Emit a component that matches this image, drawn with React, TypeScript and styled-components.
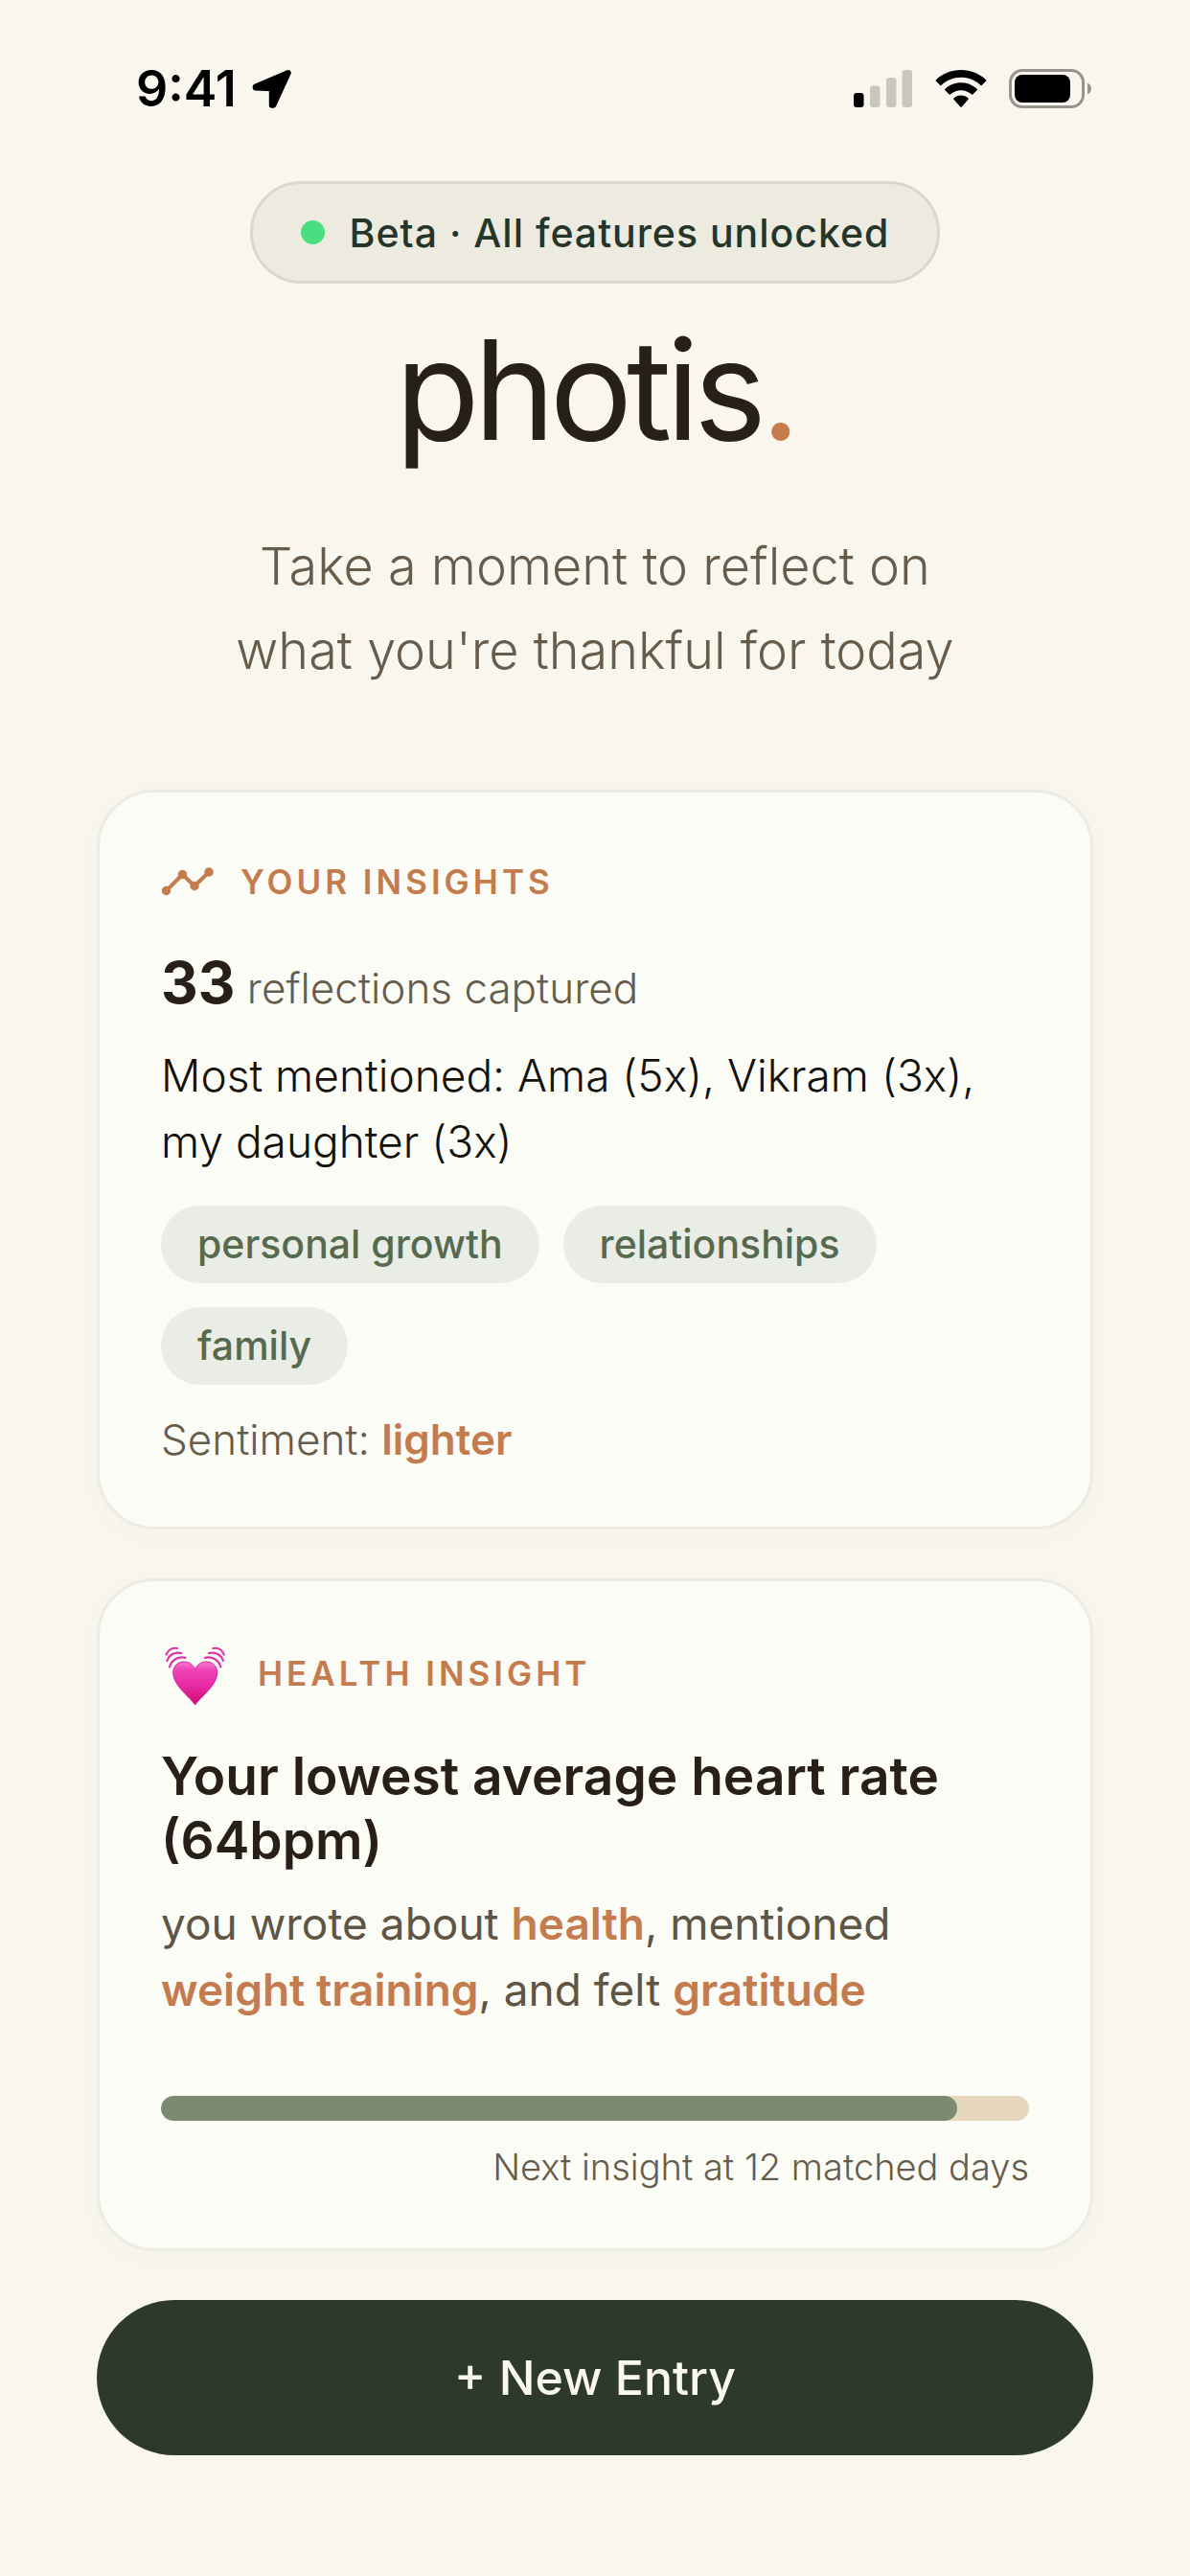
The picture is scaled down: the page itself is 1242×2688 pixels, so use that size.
import React from "react";
import styled, { createGlobalStyle } from "styled-components";

const color = {
  page: "#f9f6ee",
  card: "#fbfcf6",
  line: "#ecebe4",
  ink: "#282016",
  black: "#14110d",
  muted: "#675c4c",
  accent: "#c47b4e",
  forest: "#2d3a2b",
  sage: "#7a8b70",
};

const GlobalStyle = createGlobalStyle`
  *, *::before, *::after { box-sizing: border-box; }
  body {
    margin: 0;
    background: ${color.page};
    color: ${color.ink};
    font-family: Inter, "Liberation Sans", sans-serif;
    -webkit-font-smoothing: antialiased;
  }
  h1, h2, h3, p, ul { margin: 0; padding: 0; }
`;

const Screen = styled.div`
  min-height: 100vh;
  display: flex;
  flex-direction: column;
  background: ${color.page};
`;

const StatusBar = styled.header`
  display: flex;
  align-items: center;
  justify-content: space-between;
  height: 189px;
  padding: 0 102px 4px 142px;
`;

const StatusGroup = styled.div<{ $gap: number }>`
  display: flex;
  align-items: center;
  gap: ${(p) => p.$gap}px;
`;

const Clock = styled.span`
  font-size: 52px;
  font-weight: 600;
  line-height: 60px;
  color: #000;
`;

const Main = styled.main`
  display: flex;
  flex-direction: column;
  padding: 0 101px 120px;
`;

const BetaPill = styled.div`
  align-self: center;
  display: flex;
  align-items: center;
  gap: 26px;
  height: 107px;
  padding: 0 50px;
  border: 3px solid #dad7cb;
  border-radius: 54px;
  background: #edebdf;
  color: #25352a;
  font-size: 41px;
  font-weight: 500;
  letter-spacing: 1px;
`;

const Dot = styled.span`
  width: 25px;
  height: 25px;
  border-radius: 50%;
  background: #4ade80;
`;

const Logo = styled.h1`
  margin-top: 26px;
  text-align: center;
  font-size: 144px;
  font-weight: 400;
  line-height: 170px;
  letter-spacing: -6px;
  span { color: ${color.accent}; }
`;

const Tagline = styled.p`
  margin-top: 55px;
  text-align: center;
  font-size: 54px;
  font-weight: 300;
  line-height: 88px;
  color: ${color.muted};
`;

const Card = styled.section<{ $space: number }>`
  margin-top: ${(p) => p.$space}px;
  padding: 63px 64px 62px;
  border: 3px solid ${color.line};
  border-radius: 60px;
  background: ${color.card};
  box-shadow: 0 6px 36px rgba(40, 32, 22, 0.02);
`;

const CardHeader = styled.div<{ $gap: number }>`
  display: flex;
  align-items: center;
  gap: ${(p) => p.$gap}px;
`;

const CardLabel = styled.h2`
  font-size: 35px;
  font-weight: 600;
  line-height: 44px;
  letter-spacing: 4px;
  text-transform: uppercase;
  color: ${color.accent};
`;

const Count = styled.p`
  margin-top: 45px;
  font-size: 44px;
  font-weight: 300;
  line-height: 72px;
  color: ${color.muted};
  strong {
    font-size: 60px;
    font-weight: 700;
    line-height: 60px;
    color: ${color.ink};
  }
`;

const Mentions = styled.p`
  margin-top: 21px;
  font-size: 46px;
  font-weight: 300;
  line-height: 69px;
  color: ${color.black};
`;

const Chips = styled.ul`
  display: flex;
  flex-wrap: wrap;
  gap: 25px;
  margin-top: 32px;
  list-style: none;
`;

const Chip = styled.li`
  padding: 0 38px;
  border-radius: 41px;
  background: #eaede5;
  color: #566a50;
  font-size: 41px;
  font-weight: 500;
  line-height: 81px;
`;

const Sentiment = styled.p`
  margin-top: 29px;
  font-size: 44px;
  font-weight: 300;
  line-height: 57px;
  color: ${color.muted};
`;

const Accent = styled.strong`
  font-weight: 600;
  color: ${color.accent};
`;

const Headline = styled.h3`
  margin-top: 41px;
  font-size: 55px;
  font-weight: 600;
  line-height: 67px;
`;

const Story = styled.p`
  margin-top: 19px;
  font-size: 46px;
  font-weight: 400;
  line-height: 69px;
  color: #5f5545;
`;

const Track = styled.div`
  height: 26px;
  margin-top: 76px;
  border-radius: 13px;
  overflow: hidden;
  background: #e6d6be;
`;

const Fill = styled.div`
  height: 100%;
  border-radius: 13px;
  background: ${color.sage};
`;

const Note = styled.p`
  margin-top: 26px;
  text-align: right;
  font-size: 38px;
  font-weight: 300;
  line-height: 45px;
  color: ${color.muted};
`;

const PrimaryButton = styled.button`
  margin-top: 51px;
  height: 162px;
  border: 0;
  border-radius: 81px;
  background: ${color.forest};
  color: #faf7ef;
  font-family: inherit;
  font-size: 50px;
  font-weight: 500;
  cursor: pointer;
`;

const LocationIcon = () => (
  <svg width="42" height="42" viewBox="0 0 42 42" aria-hidden="true">
    <path
      d="M37.800 4 L22.300 37.800 L20.800 37.800 L20.800 20.300 L3.700 19.600 L3.700 18.600 Z"
      fill="#000"
      stroke="#000"
      strokeWidth="6"
      strokeLinejoin="round"
    />
  </svg>
);

const SignalIcon = () => (
  <svg width="62" height="41" viewBox="0 0 62 41" aria-hidden="true">
    <rect x="0" y="25" width="10.5" height="15" rx="3" fill="#000" />
    <rect x="17" y="17.5" width="10.5" height="22.5" rx="3" fill="#c8c6bf" />
    <rect x="34" y="9" width="10.5" height="31" rx="3" fill="#c8c6bf" />
    <rect x="50.5" y="1" width="10.5" height="39" rx="3" fill="#c8c6bf" />
  </svg>
);

const WifiIcon = () => (
  <svg width="54" height="41" viewBox="0 0 54 41" aria-hidden="true">
    <path d="M27 1 C37 1 46.500 5 53.200 11.400 Q53.700 12 53.200 12.600 L48.700 17 Q48.200 17.500 47.600 17 C42 11.800 35 8.800 27 8.800 C19 8.800 12 11.800 6.400 17 Q5.800 17.500 5.300 17 L0.800 12.600 Q0.300 12 0.800 11.400 C7.500 5 17 1 27 1 Z" />
    <path d="M27 14.300 C33.500 14.300 39.400 16.800 43.800 20.900 Q44.300 21.500 43.800 22.100 L39.300 26.500 Q38.700 27 38.100 26.500 C35.100 23.800 31.300 22.200 27 22.200 C22.700 22.200 18.900 23.800 15.900 26.500 Q15.300 27 14.700 26.500 L10.200 22.100 Q9.700 21.500 10.200 20.900 C14.600 16.800 20.500 14.300 27 14.300 Z" />
    <path d="M27 27.600 C30 27.600 32.600 28.700 34.600 30.500 Q35.200 31.100 34.600 31.700 L27.700 39.500 Q27 40.200 26.300 39.500 L19.400 31.700 Q18.800 31.100 19.400 30.500 C21.400 28.700 24 27.600 27 27.600 Z" />
  </svg>
);

const BatteryIcon = () => (
  <svg width="87" height="41" viewBox="0 0 87 41" aria-hidden="true">
    <rect x="1.500" y="1.500" width="76" height="38" rx="12.500" fill="none" stroke="#96948d" strokeWidth="3" />
    <rect x="6" y="6" width="58" height="29" rx="8" fill="#000" />
    <path d="M82 14.500 Q86 16.500 86 20.500 Q86 24.500 82 26.500 Z" fill="#96948d" />
  </svg>
);

const TrendIcon = () => (
  <svg width="57" height="60" viewBox="0 0 57 60" aria-hidden="true">
    <path
      d="M5.500 39.500 L22.500 22.500 L35 34.500 L50 20"
      fill="none"
      stroke={color.accent}
      strokeWidth="4"
      strokeLinejoin="round"
    />
    <circle cx="5.500" cy="39.500" r="4.700" fill={color.accent} />
    <circle cx="22.500" cy="22.500" r="4.700" fill={color.accent} />
    <circle cx="35" cy="34.500" r="4.700" fill={color.accent} />
    <circle cx="50" cy="20" r="4.700" fill={color.accent} />
  </svg>
);

const HeartIcon = () => (
  <svg width="72" height="66" viewBox="0 0 72 66" role="img" aria-label="Beating heart">
    <defs>
      <linearGradient id="heart" x1="0" y1="0" x2="0" y2="1">
        <stop offset="0" stopColor="#f77fd2" />
        <stop offset="0.180" stopColor="#ee45b8" />
        <stop offset="0.550" stopColor="#e82aa5" />
        <stop offset="1" stopColor="#cf0f6e" />
      </linearGradient>
    </defs>
    <path
      d="M35.700 66 C31 58.500 12.700 46 12.700 32.500 C12.700 25.500 17.500 21 24 21 C29.500 21 33.800 24 35.700 29 C37.600 24 41.900 21 47.400 21 C53.900 21 58.700 25.500 58.700 32.500 C58.700 46 40.400 58.500 35.700 66 Z"
      fill="url(#heart)"
      stroke="#d9209a"
      strokeWidth="1"
    />
    <g fill="none" stroke="#dc35a6" strokeWidth="2.200" strokeLinecap="round">
      <path d="M5.500 13.500 C7.500 8.500 12 6 17 7" />
      <path d="M6.500 20 C8.500 13.500 14.500 10.500 21.500 12" />
      <path d="M9 26.500 C11 19 17.500 15.200 25.500 16.800" />
      <path d="M65.900 13.500 C63.900 8.500 59.400 6 54.400 7" />
      <path d="M64.900 20 C62.900 13.500 56.900 10.500 49.900 12" />
      <path d="M62.400 26.500 C60.400 19 53.900 15.200 45.900 16.800" />
    </g>
  </svg>
);

const themes = ["personal growth", "relationships", "family"];
const matchedDays = 11;
const targetDays = 12;

export default function App() {
  return (
    <Screen>
      <GlobalStyle />
      <StatusBar>
        <StatusGroup $gap={16}>
          <Clock>9:41</Clock>
          <LocationIcon />
        </StatusGroup>
        <StatusGroup $gap={23}>
          <SignalIcon />
          <WifiIcon />
          <BatteryIcon />
        </StatusGroup>
      </StatusBar>
      <Main>
        <BetaPill>
          <Dot />
          <span>Beta · All features unlocked</span>
        </BetaPill>
        <Logo>
          photis<span>.</span>
        </Logo>
        <Tagline>
          Take a moment to reflect on
          <br />
          what you're thankful for today
        </Tagline>

        <Card $space={101}>
          <CardHeader $gap={26}>
            <TrendIcon />
            <CardLabel>Your insights</CardLabel>
          </CardHeader>
          <Count>
            <strong>33</strong> reflections captured
          </Count>
          <Mentions>Most mentioned: Ama (5x), Vikram (3x), my daughter (3x)</Mentions>
          <Chips>
            {themes.map((theme) => (
              <Chip key={theme}>{theme}</Chip>
            ))}
          </Chips>
          <Sentiment>
            Sentiment: <Accent>lighter</Accent>
          </Sentiment>
        </Card>

        <Card $space={51}>
          <CardHeader $gap={29}>
            <HeartIcon />
            <CardLabel>Health insight</CardLabel>
          </CardHeader>
          <Headline>Your lowest average heart rate (64bpm)</Headline>
          <Story>
            you wrote about <Accent>health</Accent>, mentioned <Accent>weight training</Accent>, and
            felt <Accent>gratitude</Accent>
          </Story>
          <Track
            role="progressbar"
            aria-label="Matched days"
            aria-valuemin={0}
            aria-valuemax={targetDays}
            aria-valuenow={matchedDays}
          >
            <Fill style={{ width: `${(matchedDays / targetDays) * 100}%` }} />
          </Track>
          <Note>Next insight at {targetDays} matched days</Note>
        </Card>

        <PrimaryButton type="button">+ New Entry</PrimaryButton>
      </Main>
    </Screen>
  );
}
